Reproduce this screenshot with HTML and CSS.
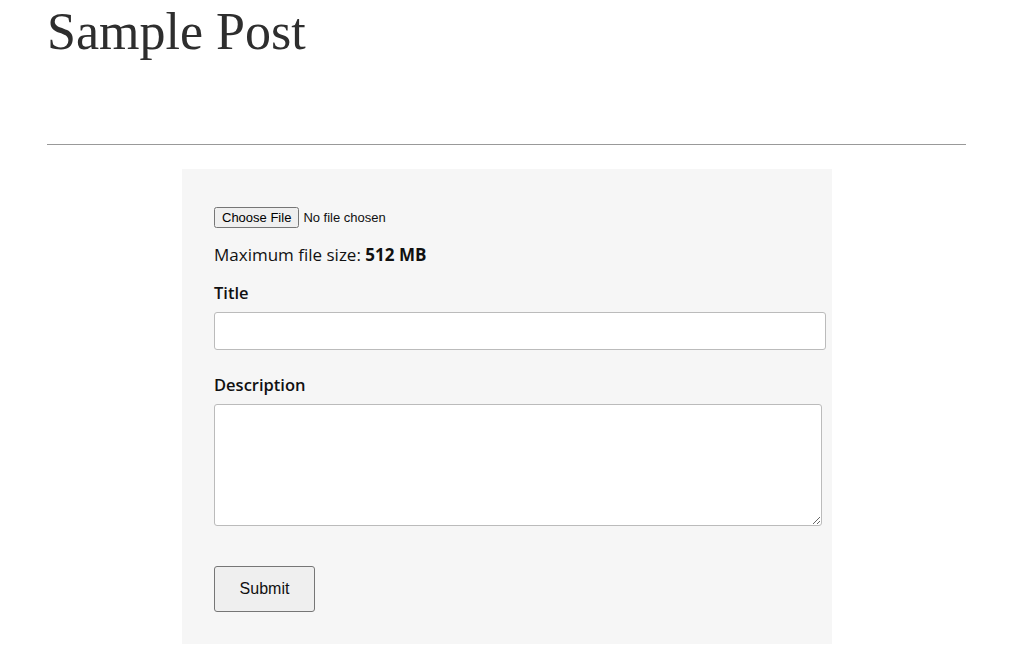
FILE: index.html
```html
<!DOCTYPE html>
<html lang="en">
<head>
    <meta charset="UTF-8">
    <meta name="viewport" content="width=device-width, initial-scale=1.0">
    <title>Sample Post</title>
    <link rel="stylesheet" href="styles.css">
</head>
<body>
    <div class="page">
        <h1 class="post-title">Sample Post</h1>
        <hr class="divider">

        <form class="upload-form">
            <input type="file" class="file-input">
            <p class="file-note">Maximum file size: <strong>512 MB</strong></p>

            <label class="field-label" for="title">Title</label>
            <input type="text" id="title" class="text-input">

            <label class="field-label" for="description">Description</label>
            <textarea id="description" class="text-area"></textarea>

            <button type="submit" class="submit-btn">Submit</button>
        </form>
    </div>
</body>
</html>
```

FILE: styles.css
```css
/* page */
body {
    margin: 0;
    background-color: #ffffff;
    font-family: 'Open Sans', 'Noto Sans', sans-serif;
    color: #111111;
}
.page {
    padding: 0 48px 0 47px;
}

/* heading */
.post-title {
    margin: 0;
    padding-top: 2px;
    font-family: 'Liberation Serif', 'DejaVu Serif', serif;
    font-weight: normal;
    font-size: 52px;
    line-height: 60px;
    color: #2e2e2e;
}
.divider {
    margin: 82px 0 24px 0;
    border: none;
    border-top: 1px solid #999999;
}

/* form panel */
.upload-form {
    width: 586px;
    margin-left: 135px;
    padding: 38px 32px 32px 32px;
    background-color: #f6f6f6;
    display: flex;
    flex-direction: column;
    align-items: flex-start;
}
.file-input {
    font-family: 'Liberation Sans', Arial, sans-serif;
    font-size: 13px;
    height: 21px;
    margin: 0;
}
.file-note {
    margin: 16px 0 0 0;
    font-size: 17px;
    line-height: 22px;
}
.file-note strong {
    font-weight: 700;
}
.field-label {
    margin-top: 16px;
    font-size: 16.5px;
    line-height: 22px;
    font-weight: 600;
}
.text-input {
    box-sizing: border-box;
    width: 612px;
    height: 38px;
    margin-top: 8px;
    border: 1px solid #bbbbbb;
    border-radius: 3px;
    background-color: #ffffff;
}
.text-input + .field-label {
    margin-top: 24px;
}
.text-area {
    box-sizing: border-box;
    width: 608px;
    height: 122px;
    margin-top: 8px;
    border: 1px solid #bbbbbb;
    border-radius: 3px;
    background-color: #ffffff;
}
.submit-btn {
    margin-top: 40px;
    width: 101px;
    height: 46px;
    font-family: 'Liberation Sans', Arial, sans-serif;
    font-size: 16px;
    color: #111111;
    background-color: #efefef;
    border: 1px solid #767676;
    border-radius: 3px;
}
```
